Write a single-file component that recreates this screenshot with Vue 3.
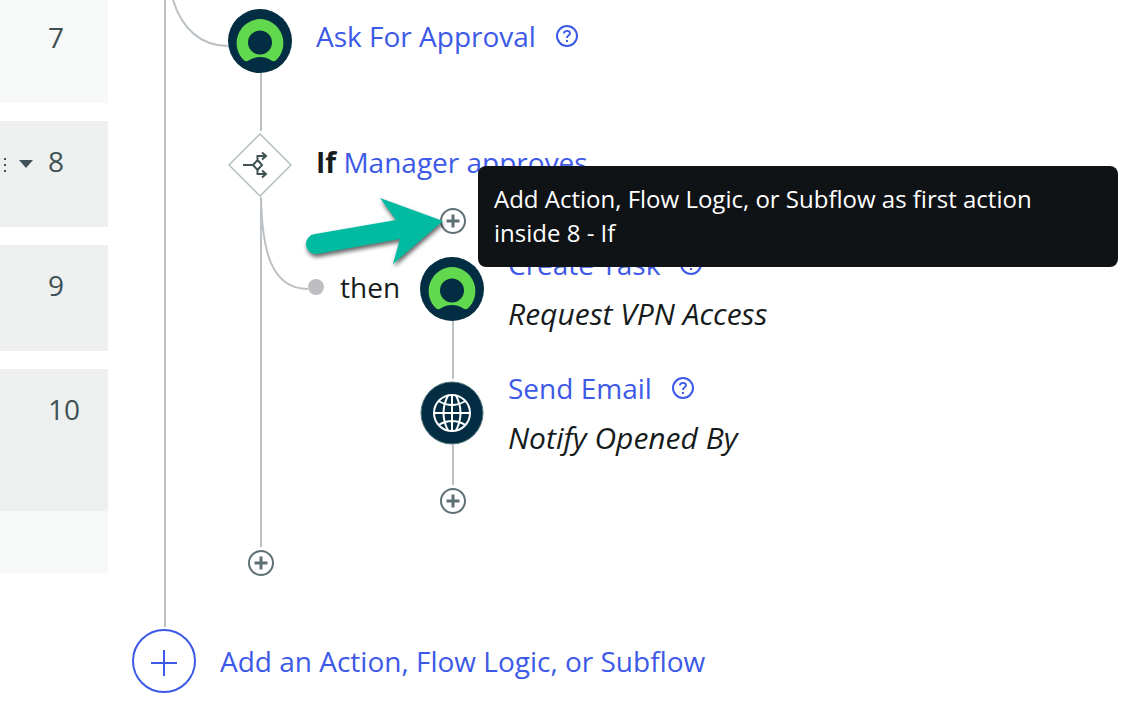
<script setup>
const gutter = [
  { n: '7', kind: 'first' },
  { n: '8', kind: 'branch', menu: true },
  { n: '9', kind: 'branch' },
  { n: '10', kind: 'branch tall' },
]
</script>

<template>
  <div class="page">
    <svg class="defs" aria-hidden="true">
      <symbol id="agent" viewBox="0 0 64 64">
        <circle cx="32" cy="32" r="32" fill="#032d42" />
        <path d="M32 10A24 24 0 0 0 16.200 51.500Q18.500 53 21 51.300Q26 48 32 48T43 51.300Q45.500 53 47.800 51.500A24 24 0 0 0 32 10Z" fill="#62d84e" />
        <circle cx="32" cy="33.500" r="12" fill="#032d42" />
      </symbol>
      <symbol id="help" viewBox="0 0 22 22">
        <circle cx="11" cy="11" r="10" fill="none" stroke="#3c59e7" stroke-width="2" />
        <path d="M8 8.500C8 6.800 9.200 5.900 11 5.900S14 6.900 14 8.400C14 10.300 11 10.500 11 13" fill="none" stroke="#3c59e7" stroke-width="1.900" />
        <rect x="10" y="15" width="2" height="2" fill="#3c59e7" />
      </symbol>
      <symbol id="plus" viewBox="0 0 26 26">
        <circle cx="13" cy="13" r="12" fill="#fff" stroke="#5f7174" stroke-width="2" />
        <path d="M13 6.500V19.500M6.500 13H19.500" stroke="#5f7174" stroke-width="3" />
      </symbol>
    </svg>

    <aside class="gutter">
      <div v-for="g in gutter" :key="g.n" :class="['cell', g.kind]">
        <button v-if="g.menu" class="menu" aria-label="Step menu">
          <svg width="34" height="18" viewBox="0 0 34 18">
            <path d="M4 3h2v2H4zM4 9h2v2H4zM4 15h2v2H4zM19 5H33L26 13Z" fill="#3f5154" />
          </svg>
        </button>
        <span class="num">{{ g.n }}</span>
      </div>
      <div class="tail"></div>
    </aside>

    <main class="flow">
      <svg class="wires" width="400" height="640" viewBox="0 0 400 640" fill="none" stroke="#bcc1c5" stroke-width="2" aria-hidden="true">
        <path d="M57 0V627M153 73V131M153 197V547M345 321V379M345 445V485" />
        <path d="M65 0C74 29 93 46 120 46M153 197C154 250 163 289 200 289" />
      </svg>

      <section class="step outer">
        <svg class="node"><use href="#agent" /></svg>
        <div class="text">
          <div class="title">
            <a href="#approval">Ask For Approval</a>
            <button class="help" aria-label="Help"><svg><use href="#help" /></svg></button>
          </div>
        </div>
      </section>

      <section class="step outer logic">
        <svg class="node" viewBox="0 0 64 64" fill="none">
          <path d="M32 1L63 32L32 63L1 32Z" fill="#fff" stroke="#b3bdbe" stroke-width="1.500" />
          <g stroke="#3f5154" stroke-width="2">
            <path d="M15 32H25M29.500 27L34 32L29.500 37L25 32ZM29.500 27V23H38M29.500 37V41H38" />
            <path d="M34 19.500L38 23L34 26.500M34 37.500L38 41L34 44.500" />
          </g>
        </svg>
        <div class="text">
          <div class="title"><span><strong>If</strong>&nbsp;<a href="#condition">Manager approves</a></span></div>
        </div>
        <div class="insert">
          <button class="add" aria-describedby="tip" aria-label="Add first action"><svg><use href="#plus" /></svg></button>
          <div id="tip" class="tip" role="tooltip">Add Action, Flow Logic, or Subflow as first action inside 8 - If</div>
          <svg class="pointer" width="150" height="84" viewBox="0 0 150 84" aria-hidden="true">
            <path d="M143 30L80 7L96 29L15 43A10 10 0 0 0 17 63L100 48L93 73Z" fill="#00bba2" />
          </svg>
        </div>
      </section>

      <section class="step inner">
        <div class="then"><i class="dot"></i>then</div>
        <svg class="node"><use href="#agent" /></svg>
        <div class="text">
          <div class="title">
            <a href="#task">Create Task</a>
            <button class="help" aria-label="Help"><svg><use href="#help" /></svg></button>
          </div>
          <div class="note">Request VPN Access</div>
        </div>
      </section>

      <section class="step inner">
        <div class="then"></div>
        <div class="stack">
          <svg class="node" viewBox="0 0 64 64" fill="none" stroke="#fff" stroke-width="2">
            <circle cx="32" cy="32" r="31" fill="#032d42" stroke="#53747d" stroke-width="1" />
            <circle cx="32" cy="32" r="18" />
            <path d="M14 32H50M32 14V50M18.500 20Q32 28 45.500 20M18.500 44Q32 36 45.500 44" />
            <path d="M28 14.500Q19 32 28 49.500M36 14.500Q45 32 36 49.500" />
          </svg>
          <button class="add" aria-label="Add action after Send Email"><svg><use href="#plus" /></svg></button>
        </div>
        <div class="text">
          <div class="title">
            <a href="#email">Send Email</a>
            <button class="help" aria-label="Help"><svg><use href="#help" /></svg></button>
          </div>
          <div class="note">Notify Opened By</div>
        </div>
      </section>

      <button class="add branch-end" aria-label="Add action after If"><svg><use href="#plus" /></svg></button>

      <button class="add-main">
        <svg class="node" viewBox="0 0 64 64" fill="none" stroke="#3c59e7" stroke-width="2">
          <circle cx="32" cy="32" r="31" />
          <path d="M32 21V47M19 34H45" />
        </svg>
        <span>Add an Action, Flow Logic, or Subflow</span>
      </button>
    </main>
  </div>
</template>

<style>
body {
  margin: 0;
  background: #fff;
}
</style>

<style scoped>
.page {
  display: flex;
  min-height: 100vh;
  overflow: hidden;
  font: 28px/38px "Open Sans", "Noto Sans", sans-serif;
  color: #161b1c;
}
.defs {
  position: absolute;
  width: 0;
  height: 0;
}
button {
  padding: 0;
  border: 0;
  background: none;
  font: inherit;
  color: inherit;
  cursor: pointer;
}
a,
.add-main {
  color: #3c59e7;
  text-decoration: none;
}
.gutter {
  flex: none;
  width: 108px;
  color: #3f5154;
}
.cell {
  display: flex;
  align-items: flex-start;
  box-sizing: border-box;
  height: 106px;
  margin-bottom: 18px;
  padding-top: 21px;
  background: #eef0f0;
}
.cell.first {
  height: 103px;
  padding-top: 18px;
  background: #f7f9f9;
}
.cell.tall {
  height: 142px;
  margin-bottom: 0;
}
.tail {
  height: 62px;
  background: #f7f9f9;
}
.num {
  margin-left: 48px;
}
.menu {
  display: flex;
  align-items: center;
  height: 44px;
}
.menu + .num {
  margin-left: 14px;
}
.flow {
  position: relative;
  flex: 1;
  min-width: 0;
  padding-top: 9px;
}
.wires {
  position: absolute;
  top: 0;
  left: 0;
}
.step {
  position: relative;
  display: flex;
  height: 124px;
}
.outer {
  padding-left: 120px;
}
.inner {
  padding-left: 200px;
}
.node {
  display: block;
  flex: none;
  width: 64px;
  height: 64px;
}
.text {
  margin-left: 24px;
  white-space: nowrap;
}
.title {
  display: flex;
  align-items: center;
  gap: 20px;
}
.outer .text {
  padding-top: 8px;
}
.logic .text {
  padding-top: 10px;
}
.inner .title {
  margin-top: -12px;
}
.note {
  margin-top: 12px;
  font-size: 30px;
  font-style: italic;
}
.help,
.help svg {
  display: block;
  width: 22px;
  height: 22px;
}
.then {
  display: flex;
  align-items: center;
  gap: 16px;
  width: 112px;
  height: 60px;
}
.dot {
  width: 16px;
  height: 16px;
  border-radius: 50%;
  background: #bdbdc2;
}
.add,
.add svg {
  display: block;
  width: 26px;
  height: 26px;
}
.stack .add {
  margin: 43px 0 0 20px;
}
.insert {
  position: absolute;
  z-index: 1;
  top: 75px;
  left: 332px;
  right: 6px;
}
.tip {
  position: absolute;
  top: -42px;
  left: 38px;
  right: 0;
  padding: 16px 80px 17px 16px;
  border-radius: 8px;
  background: #0f1316;
  color: #fff;
  font-size: 24px;
  line-height: 34px;
}
.pointer {
  position: absolute;
  top: -17px;
  left: -140px;
  filter: drop-shadow(1px 3px 2px rgb(0 0 0 / 60%));
}
.branch-end {
  margin: 45px 0 53px 140px;
}
.add-main {
  display: flex;
  align-items: center;
  gap: 24px;
  margin-left: 24px;
  white-space: nowrap;
}
</style>
